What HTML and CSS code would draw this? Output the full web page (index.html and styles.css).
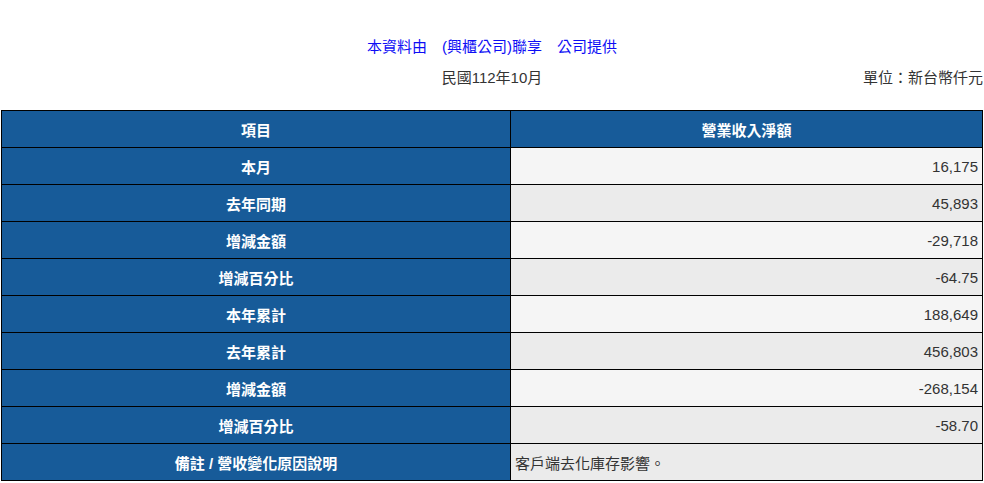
FILE: index.html
```html
<!DOCTYPE html>
<html lang="zh-Hant">
<head>
<meta charset="utf-8">
<title>營業收入</title>
<link rel="stylesheet" href="styles.css">
</head>
<body>
<div class="page">
  <div class="title">本資料由　(興櫃公司)聯享　公司提供</div>
  <div class="subhead">
    <span></span>
    <span class="date">民國112年10月</span>
    <span class="unit">單位：新台幣仟元</span>
  </div>
  <table class="report">
    <colgroup><col class="c1"><col class="c2"></colgroup>
    <tr><th>項目</th><th>營業收入淨額</th></tr>
    <tr class="odd"><th>本月</th><td>16,175</td></tr>
    <tr class="even"><th>去年同期</th><td>45,893</td></tr>
    <tr class="odd"><th>增減金額</th><td>-29,718</td></tr>
    <tr class="even"><th>增減百分比</th><td>-64.75</td></tr>
    <tr class="odd"><th>本年累計</th><td>188,649</td></tr>
    <tr class="even"><th>去年累計</th><td>456,803</td></tr>
    <tr class="odd"><th>增減金額</th><td>-268,154</td></tr>
    <tr class="even"><th>增減百分比</th><td>-58.70</td></tr>
    <tr class="even"><th>備註 / 營收變化原因說明</th><td class="note">客戶端去化庫存影響。</td></tr>
  </table>
</div>
</body>
</html>
```
FILE: styles.css
```css
html, body {
  margin: 0;
  padding: 0;
  background: #fff;
}
body {
  font-family: "Liberation Sans", Arial, "Noto Sans CJK TC", sans-serif;
  font-size: 15px;
  color: #333;
}
.page {
  padding: 37px 1px 0 1px;
}
.title {
  text-align: center;
  color: #0d0df5;
  line-height: 20px;
  height: 20px;
}
.subhead {
  display: grid;
  grid-template-columns: 1fr auto 1fr;
  margin-top: 11px;
  line-height: 20px;
  height: 20px;
}
.date {
  text-align: center;
}
.unit {
  text-align: right;
}
.report {
  margin-top: 22px;
  width: 100%;
  border-collapse: collapse;
}
.c1 { width: 509px; }
.report th, .report td {
  border: 1px solid #000;
  height: 37px;
  padding: 0 4px;
  box-sizing: border-box;
}
.report th {
  background: #175b99;
  color: #fff;
  font-weight: bold;
  text-align: center;
}
.report td {
  text-align: right;
  color: #333;
}
.report tr.odd td { background: #f5f5f5; }
.report tr.even td { background: #ebebeb; }
.report td.note { text-align: left; }
```
